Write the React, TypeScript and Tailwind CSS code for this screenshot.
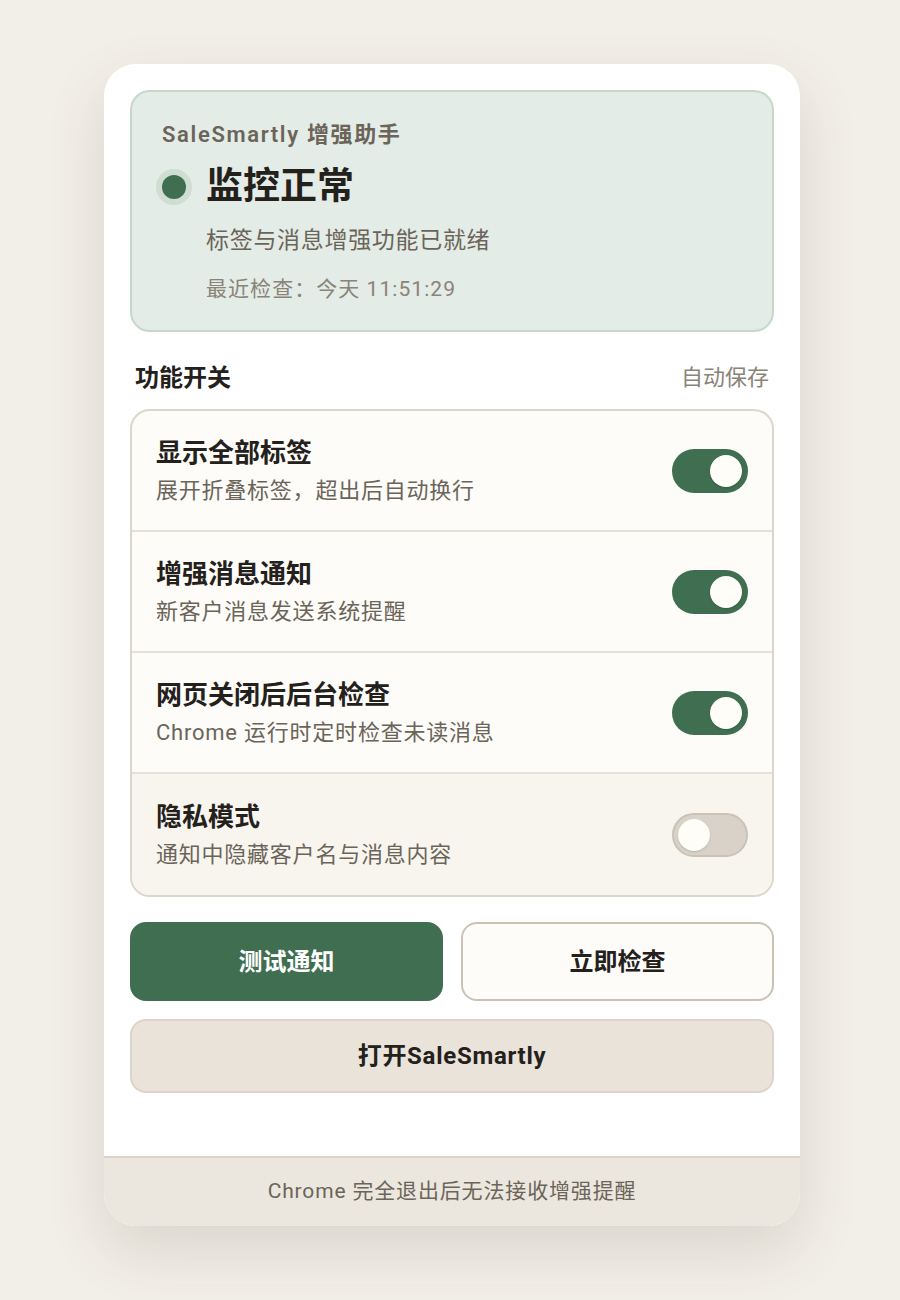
import React, { useState } from "react";

const FONT = "font-['Roboto','Noto_Sans_CJK_SC',sans-serif]";

type Item = { key: string; title: string; desc: string };

const ITEMS: Item[] = [
  { key: "tags", title: "显示全部标签", desc: "展开折叠标签，超出后自动换行" },
  { key: "notify", title: "增强消息通知", desc: "新客户消息发送系统提醒" },
  { key: "background", title: "网页关闭后后台检查", desc: "Chrome 运行时定时检查未读消息" },
  { key: "privacy", title: "隐私模式", desc: "通知中隐藏客户名与消息内容" },
];

function Toggle({ on, onChange }: { on: boolean; onChange: () => void }) {
  return (
    <button
      onClick={onChange}
      className={`flex h-[44px] w-[76px] shrink-0 items-center rounded-full ${
        on ? "justify-end bg-[#3f6e51] px-[6px]" : "justify-start border-2 border-[#cbc1b4] bg-[#d9d2c8] px-[4px]"
      }`}
    >
      <span className="block h-[32px] w-[32px] rounded-full bg-[#fffdf8] shadow-[0_1px_2px_rgba(0,0,0,0.15)]" />
    </button>
  );
}

export default function App() {
  const [settings, setSettings] = useState<Record<string, boolean>>({
    tags: true,
    notify: true,
    background: true,
    privacy: false,
  });

  const toggle = (key: string) => setSettings((s) => ({ ...s, [key]: !s[key] }));

  return (
    <main className={`min-h-[1300px] bg-[#f2efe8] pt-[64px] ${FONT}`}>
      <div className="ml-[104px] w-[696px] overflow-hidden rounded-[32px] bg-white shadow-[0_24px_60px_rgba(70,60,40,0.14)]">
        <div className="px-[26px] pt-[26px] pb-[63px]">
          {/* status panel */}
          <section className="rounded-[20px] border-2 border-[#c6d8cc] bg-[#e3ece6] px-[30px] pt-[30px] pb-[27px]">
            <div className="text-[22px] leading-[26px] font-semibold tracking-[0.075em] text-[#6b6459]">
              SaleSmartly 增强助手
            </div>
            <div className="mt-[17px] flex items-center gap-[20px]">
              <span className="block h-[24px] w-[24px] rounded-full bg-[#3f6e51] shadow-[0_0_0_6px_#cfddd3]" />
              <h1 className="text-[37px] leading-[44px] font-bold text-[#24201b]">监控正常</h1>
            </div>
            <p className="mt-[16px] ml-[44px] text-[23px] leading-[32px] tracking-[0.03em] text-[#6b6459]">
              标签与消息增强功能已就绪
            </p>
            <p className="mt-[18px] ml-[44px] text-[21px] leading-[28px] tracking-[0.05em] text-[#8a8378]">
              最近检查：今天 11:51:29
            </p>
          </section>

          {/* settings */}
          <div className="mt-[31px] mb-[16px] flex items-center justify-between px-[5px]">
            <h2 className="text-[24px] leading-[30px] font-semibold text-[#24201b]">功能开关</h2>
            <span className="text-[22px] leading-[30px] text-[#8a8378]">自动保存</span>
          </div>

          <div className="overflow-hidden rounded-[20px] border-2 border-[#ddd6cb] bg-[#fdfcf8]">
            {ITEMS.map((item, i) => (
              <div
                key={item.key}
                className={`flex h-[121px] items-center justify-between px-[24px] ${
                  i < ITEMS.length - 1 ? "border-b-2 border-[#e6e1d8]" : "bg-[#f8f5ef]"
                }`}
              >
                <div className="flex flex-col gap-[6px]">
                  <span className="text-[26px] leading-[34px] font-bold text-[#24201b]">{item.title}</span>
                  <span className="text-[22px] leading-[30px] tracking-[0.035em] text-[#6b6459]">{item.desc}</span>
                </div>
                <Toggle on={settings[item.key]} onChange={() => toggle(item.key)} />
              </div>
            ))}
          </div>

          {/* actions */}
          <div className="mt-[25px] grid grid-cols-2 gap-[18px]">
            <button className="h-[79px] rounded-[16px] bg-[#3f6e51] text-[24px] font-bold text-white">
              测试通知
            </button>
            <button className="h-[79px] rounded-[16px] border-2 border-[#cdc1b3] bg-[#fdfcf8] text-[24px] font-bold text-[#24201b]">
              立即检查
            </button>
          </div>
          <button className="mt-[18px] h-[74px] w-full rounded-[16px] border-2 border-[#dcd4c7] bg-[#e9e3d9] text-[24px] font-bold tracking-[0.03em] text-[#24201b]">
            打开SaleSmartly
          </button>
        </div>

        <footer className="flex h-[70px] items-center justify-center border-t-2 border-[#dbd4c8] bg-[#ebe7df] text-[21px] tracking-[0.04em] text-[#6b6459]">
          Chrome 完全退出后无法接收增强提醒
        </footer>
      </div>
    </main>
  );
}
